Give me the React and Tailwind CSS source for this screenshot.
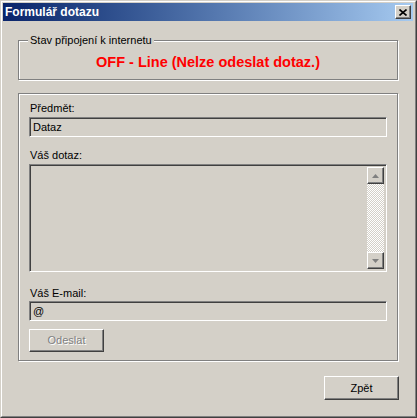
import React from "react";

const font = { fontFamily: '"Liberation Sans", Arial, sans-serif' };

const sunken =
  "border border-t-[#808080] border-l-[#808080] border-b-white border-r-white shadow-[inset_1px_1px_0_#404040,inset_-1px_-1px_0_#d4d0c8] bg-[#d4d0c8]";
const raised =
  "border border-t-white border-l-white border-b-[#404040] border-r-[#404040] shadow-[inset_-1px_-1px_0_#808080] bg-[#d4d0c8]";
const etched =
  "border border-[#808080] shadow-[inset_1px_1px_0_#fff,1px_1px_0_#fff]";

const Arrow = ({ down }) => (
  <svg width="7" height="4" viewBox="0 0 7 4" className="block">
    {down ? (
      <path d="M0 0h7L3.5 4z" fill="#808080" />
    ) : (
      <path d="M3.5 0L7 4H0z" fill="#808080" />
    )}
  </svg>
);

const Label = ({ children, className = "" }) => (
  <div className={`ml-[11px] text-[11px] leading-[14px] text-black ${className}`}>{children}</div>
);

export default function App() {
  return (
    <div
      style={font}
      className="w-[417px] h-[418px] border border-t-[#d4d0c8] border-l-[#d4d0c8] border-b-[#404040] border-r-[#404040] bg-[#d4d0c8]"
    >
      <div className="h-full border border-t-white border-l-white border-b-[#808080] border-r-[#808080] pt-[1px] pl-[1px] pr-[2px] pb-[2px] flex flex-col">
        {/* title bar */}
        <div className="h-[18px] flex items-center justify-between bg-gradient-to-r from-[#0a246a] to-[#a6caf0] pl-[2px] pr-[2px]">
          <span className="text-white font-bold text-[12px] leading-[18px]">Formulář dotazu</span>
          <button className={`${raised} w-[16px] h-[14px] flex items-center justify-center p-0`}>
            <svg width="8" height="7" viewBox="0 0 8 7">
              <path d="M0.5 0.5L7.5 6.5M7.5 0.5L0.5 6.5" stroke="#000" strokeWidth="1.6" />
            </svg>
          </button>
        </div>

        <div className="flex-1 flex flex-col px-[15px]">
          {/* connection status */}
          <div className={`${etched} relative mt-[19px] h-[40px] pt-[12px]`}>
            <span className="absolute -top-[8px] left-[9px] px-[2px] bg-[#d4d0c8] text-[11px] leading-[14px] text-black">
              Stav připojení k internetu
            </span>
            <div className="text-center text-[#ff0000] font-bold text-[14.5px] leading-[18px]">
              OFF - Line (Nelze odeslat dotaz.)
            </div>
          </div>

          {/* form */}
          <div className={`${etched} mt-[13px] h-[268px] pt-[7px] flex flex-col`}>
            <Label>Předmět:</Label>
            <div className={`${sunken} mx-[10px] mt-[2px] h-[20px] pl-[3px] text-[11px] leading-[16px] flex items-center`}>
              Dataz
            </div>

            <Label className="mt-[11px]">Váš dotaz:</Label>
            <div className={`${sunken} mx-[10px] mt-[2px] h-[108px] flex justify-end p-[2px]`}>
              <div className="w-[17px] h-full flex flex-col">
                <div className={`${raised} h-[17px] flex items-center justify-center`}>
                  <Arrow />
                </div>
                <div className="flex-1 bg-[repeating-conic-gradient(#fff_0_25%,#d4d0c8_0_50%)] bg-[length:2px_2px]" />
                <div className={`${raised} h-[17px] flex items-center justify-center`}>
                  <Arrow down />
                </div>
              </div>
            </div>

            <Label className="mt-[14px]">Váš E-mail:</Label>
            <div className={`${sunken} mx-[10px] mt-[1px] h-[20px] pl-[3px] text-[11px] leading-[16px] flex items-center`}>
              @
            </div>

            <div className="mx-[10px] mt-[6px]">
              <button
                disabled
                className={`${raised} w-[75px] h-[23px] text-[11px] text-[#808080] [text-shadow:1px_1px_0_#fff]`}
              >
                Odeslat
              </button>
            </div>
          </div>

          <div className="mt-[15px] flex justify-end -mr-[1px]">
            <button className={`${raised} w-[75px] h-[24px] text-[11px] text-black`}>Zpět</button>
          </div>
        </div>
      </div>
    </div>
  );
}
